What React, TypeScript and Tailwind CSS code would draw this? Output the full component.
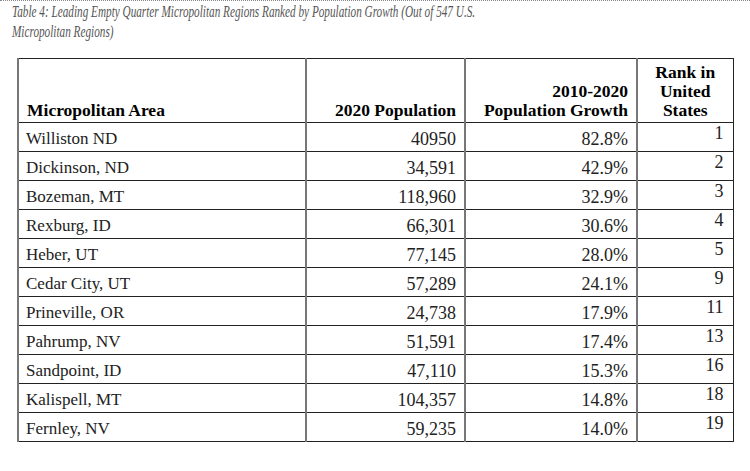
const rows: [string, string, string, string][] = [
  ['Williston ND', '40950', '82.8%', '1'],
  ['Dickinson, ND', '34,591', '42.9%', '2'],
  ['Bozeman, MT', '118,960', '32.9%', '3'],
  ['Rexburg, ID', '66,301', '30.6%', '4'],
  ['Heber, UT', '77,145', '28.0%', '5'],
  ['Cedar City, UT', '57,289', '24.1%', '9'],
  ['Prineville, OR', '24,738', '17.9%', '11'],
  ['Pahrump, NV', '51,591', '17.4%', '13'],
  ['Sandpoint, ID', '47,110', '15.3%', '16'],
  ['Kalispell, MT', '104,357', '14.8%', '18'],
  ['Fernley, NV', '59,235', '14.0%', '19'],
]

const serif = "font-['Liberation_Serif',serif]"

export default function App() {
  return (
    <div className={`w-[750px] h-[471px] bg-white border-t border-dotted border-[#888] ${serif}`}>
      {/* 표 제목 - 좁은 이탤릭 서체 흉내 */}
      <div className="pl-[12px] pt-[1px]">
        <p className="origin-left scale-x-[0.68] italic text-[16.5px] leading-[20px] text-[#555] whitespace-nowrap">
          Table 4: Leading Empty Quarter Micropolitan Regions Ranked by Population Growth (Out of 547 U.S.
          <br />
          Micropolitan Regions)
        </p>
      </div>

      <table className="mt-[16px] ml-[17px] w-[715px] table-fixed border-collapse border border-[#222] text-[#222]">
        <colgroup>
          <col className="w-[288px]" />
          <col className="w-[159px]" />
          <col className="w-[172px]" />
          <col className="w-[96px]" />
        </colgroup>
        <thead>
          <tr className="h-[64px] text-[17.5px] leading-[19px] font-bold text-black">
            <th className="border-x-2 border-x-[#777] border-b border-b-[#222] px-[8px] pb-[2px] align-bottom text-left">
              Micropolitan Area
            </th>
            <th className="border-x-2 border-x-[#777] border-b border-b-[#222] px-[8px] pb-[2px] align-bottom text-right">
              2020 Population
            </th>
            <th className="border-x-2 border-x-[#777] border-b border-b-[#222] px-[8px] pb-[2px] align-bottom text-right">
              2010-2020
              <br />
              Population Growth
            </th>
            <th className="border-b border-b-[#222] px-[4px] pb-[2px] align-bottom text-center">
              Rank in
              <br />
              United
              <br />
              States
            </th>
          </tr>
        </thead>
        <tbody className="text-[18px] leading-[20px]">
          {rows.map(([area, pop, growth, rank]) => (
            <tr key={area} className="h-[29px]">
              <td className="border-x-2 border-x-[#777] border-b border-b-[#222] px-[7px] pt-[6px] pb-[2px] align-top text-left text-[17px]">
                {area}
              </td>
              <td className="border-x-2 border-x-[#777] border-b border-b-[#222] px-[8px] pt-[6px] pb-[2px] align-top text-right">
                {pop}
              </td>
              <td className="border-x-2 border-x-[#777] border-b border-b-[#222] px-[8px] pt-[6px] pb-[2px] align-top text-right">
                {growth}
              </td>
              <td className="border-b border-b-[#222] px-[9px] pt-0 pb-[8px] align-top text-right">
                {rank}
              </td>
            </tr>
          ))}
        </tbody>
      </table>
    </div>
  )
}
